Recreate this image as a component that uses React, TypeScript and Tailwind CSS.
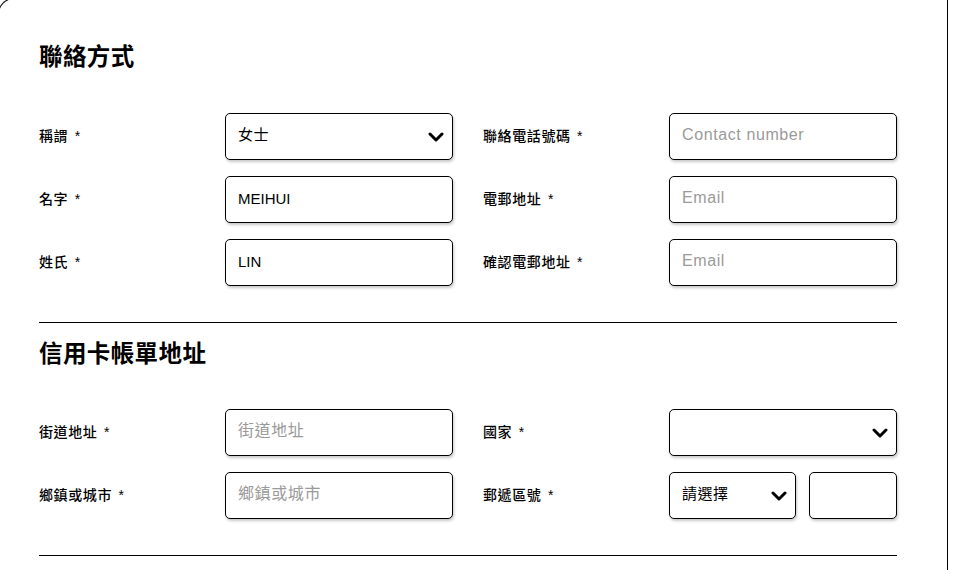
import React from 'react'

const font = `font-['Liberation_Sans','Noto_Sans_CJK_TC',sans-serif]`

function Chevron() {
  return (
    <svg width="16" height="10" viewBox="0 0 16 10" className="shrink-0">
      <path d="M2 2 L8 8 L14 2" fill="none" stroke="#000" strokeWidth="3" strokeLinecap="round" strokeLinejoin="round" />
    </svg>
  )
}

const boxClass =
  'h-[47px] rounded-[5px] border border-black bg-white shadow-[1px_2px_3px_rgba(0,0,0,0.22)]'

function TextBox({ value, placeholder, className = 'w-[228px]' }: { value?: string; placeholder?: string; className?: string }) {
  return (
    <input
      readOnly
      defaultValue={value}
      placeholder={placeholder}
      className={`${boxClass} ${className} px-3 pb-[3px] text-black outline-none placeholder:text-[#9a9a9a] ${
        value ? 'text-[15px]' : 'text-[16px] tracking-[0.6px]'
      }`}
    />
  )
}

function SelectBox({ value, className = 'w-[228px]' }: { value?: string; className?: string }) {
  return (
    <div className={`${boxClass} ${className} flex items-center justify-between pl-3 pr-[8px]`}>
      <span className="pb-[3px] text-[15px] tracking-[0.5px] text-black">{value}</span>
      <Chevron />
    </div>
  )
}

function Field({ label, children }: { label: string; children: React.ReactNode }) {
  return (
    <div className="flex items-center">
      <label className="w-[186px] text-[14px] font-medium tracking-[0.6px] text-black">
        {label} <span className="ml-[2px]">*</span>
      </label>
      {children}
    </div>
  )
}

function Heading({ children }: { children: React.ReactNode }) {
  return <h2 className="text-[23.5px] font-semibold leading-[32px] tracking-[0.4px] text-black">{children}</h2>
}

export default function App() {
  return (
    <div className={`h-[570px] overflow-hidden bg-white ${font}`}>
      <div className="-ml-[2px] -mt-[2px] w-[950px] rounded-tl-[16px] border-l border-r border-t border-black pb-10 pl-10 pr-[50px] pt-[42px]">
        <Heading>聯絡方式</Heading>

        <div className="mt-10 grid grid-cols-[414px_414px] gap-x-[30px] gap-y-4">
          <Field label="稱謂">
            <SelectBox value="女士" />
          </Field>
          <Field label="聯絡電話號碼">
            <TextBox placeholder="Contact number" />
          </Field>
          <Field label="名字">
            <TextBox value="MEIHUI" />
          </Field>
          <Field label="電郵地址">
            <TextBox placeholder="Email" />
          </Field>
          <Field label="姓氏">
            <TextBox value="LIN" />
          </Field>
          <Field label="確認電郵地址">
            <TextBox placeholder="Email" />
          </Field>
        </div>

        <div className="mt-9 h-px bg-black" />

        <div className="mt-[15px]">
          <Heading>信用卡帳單地址</Heading>
        </div>

        <div className="mt-[39px] grid grid-cols-[414px_414px] gap-x-[30px] gap-y-4">
          <Field label="街道地址">
            <TextBox placeholder="街道地址" />
          </Field>
          <Field label="國家">
            <SelectBox />
          </Field>
          <Field label="鄉鎮或城市">
            <TextBox placeholder="鄉鎮或城市" />
          </Field>
          <Field label="郵遞區號">
            <div className="flex gap-[13px]">
              <SelectBox value="請選擇" className="w-[127px]" />
              <TextBox className="w-[88px]" />
            </div>
          </Field>
        </div>

        <div className="mt-9 h-px bg-black" />
      </div>
    </div>
  )
}
